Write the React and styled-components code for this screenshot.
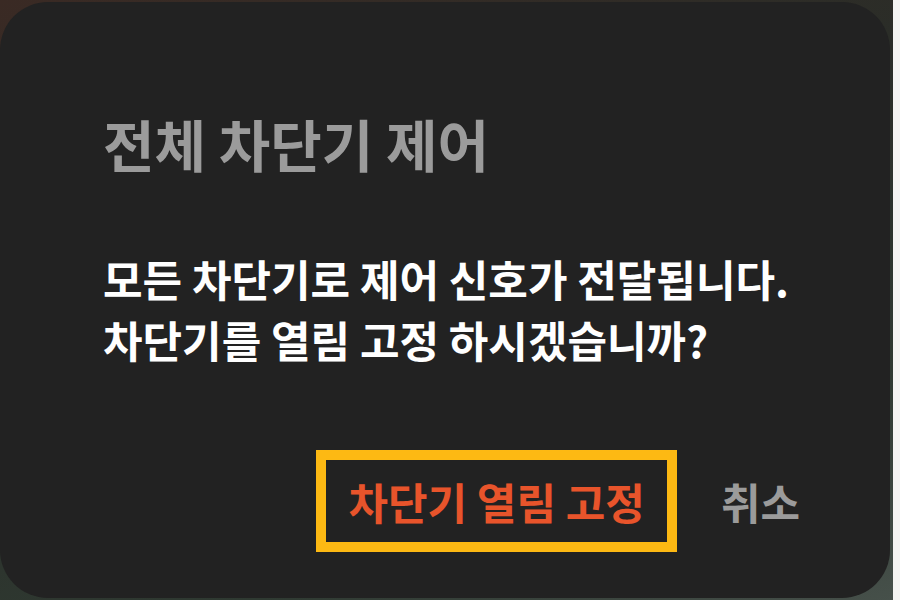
import React from 'react'
import styled, { createGlobalStyle } from 'styled-components'

const GlobalStyle = createGlobalStyle`
  html, body {
    margin: 0;
    padding: 0;
    width: 900px;
    height: 600px;
    overflow: hidden;
    background: #ffffff;
  }
  * {
    box-sizing: border-box;
  }
`

const Page = styled.div`
  display: flex;
  flex-direction: row;
  width: 900px;
  height: 600px;
`

const Backdrop = styled.div`
  display: flex;
  flex: 0 0 893px;
  padding: 2px 3px 2px 0;
  background: linear-gradient(160deg, #3a2a24 0%, #2a2d28 40%, #2f3a32 75%, #46504a 100%);
`

const Edge = styled.div`
  flex: 1;
  background: #f4f4f2;
`

const Card = styled.div`
  display: flex;
  flex-direction: column;
  flex: 1;
  background: #222222;
  border-radius: 48px;
  padding: 103px 90px 0 103px;
  font-family: "Noto Sans CJK KR", "Noto Sans", sans-serif;
`

const Title = styled.h2`
  margin: 0;
  font-size: 56px;
  line-height: 76px;
  font-weight: 700;
  color: #9b9b9b;
  letter-spacing: 0;
`

const Message = styled.p`
  margin: 67px 0 0;
  font-size: 43px;
  line-height: 61px;
  font-weight: 700;
  color: #ffffff;
`

const Actions = styled.div`
  display: flex;
  flex-direction: row;
  justify-content: flex-end;
  align-items: center;
  gap: 44px;
  margin-top: 80px;
`

const ActionButton = styled.button`
  display: flex;
  align-items: center;
  justify-content: center;
  height: ${({ $highlighted }) => ($highlighted ? '102px' : 'auto')};
  padding: ${({ $highlighted }) => ($highlighted ? '0 22px' : '0')};
  border: ${({ $highlighted }) => ($highlighted ? '10px solid #fdb913' : 'none')};
  background: transparent;
  font-family: inherit;
  font-size: 43px;
  font-weight: 700;
  color: ${({ $tone }) => ($tone === 'primary' ? '#e8542b' : '#9b9b9b')};
  cursor: pointer;
`

export default function App() {
  return (
    <>
      <GlobalStyle />
      <Page>
        <Backdrop>
          <Card>
            <Title>전체 차단기 제어</Title>
            <Message>
              모든 차단기로 제어 신호가 전달됩니다.
              <br />
              차단기를 열림 고정 하시겠습니까?
            </Message>
            <Actions>
              <ActionButton $tone="primary" $highlighted>차단기 열림 고정</ActionButton>
              <ActionButton $tone="secondary">취소</ActionButton>
            </Actions>
          </Card>
        </Backdrop>
        <Edge />
      </Page>
    </>
  )
}
